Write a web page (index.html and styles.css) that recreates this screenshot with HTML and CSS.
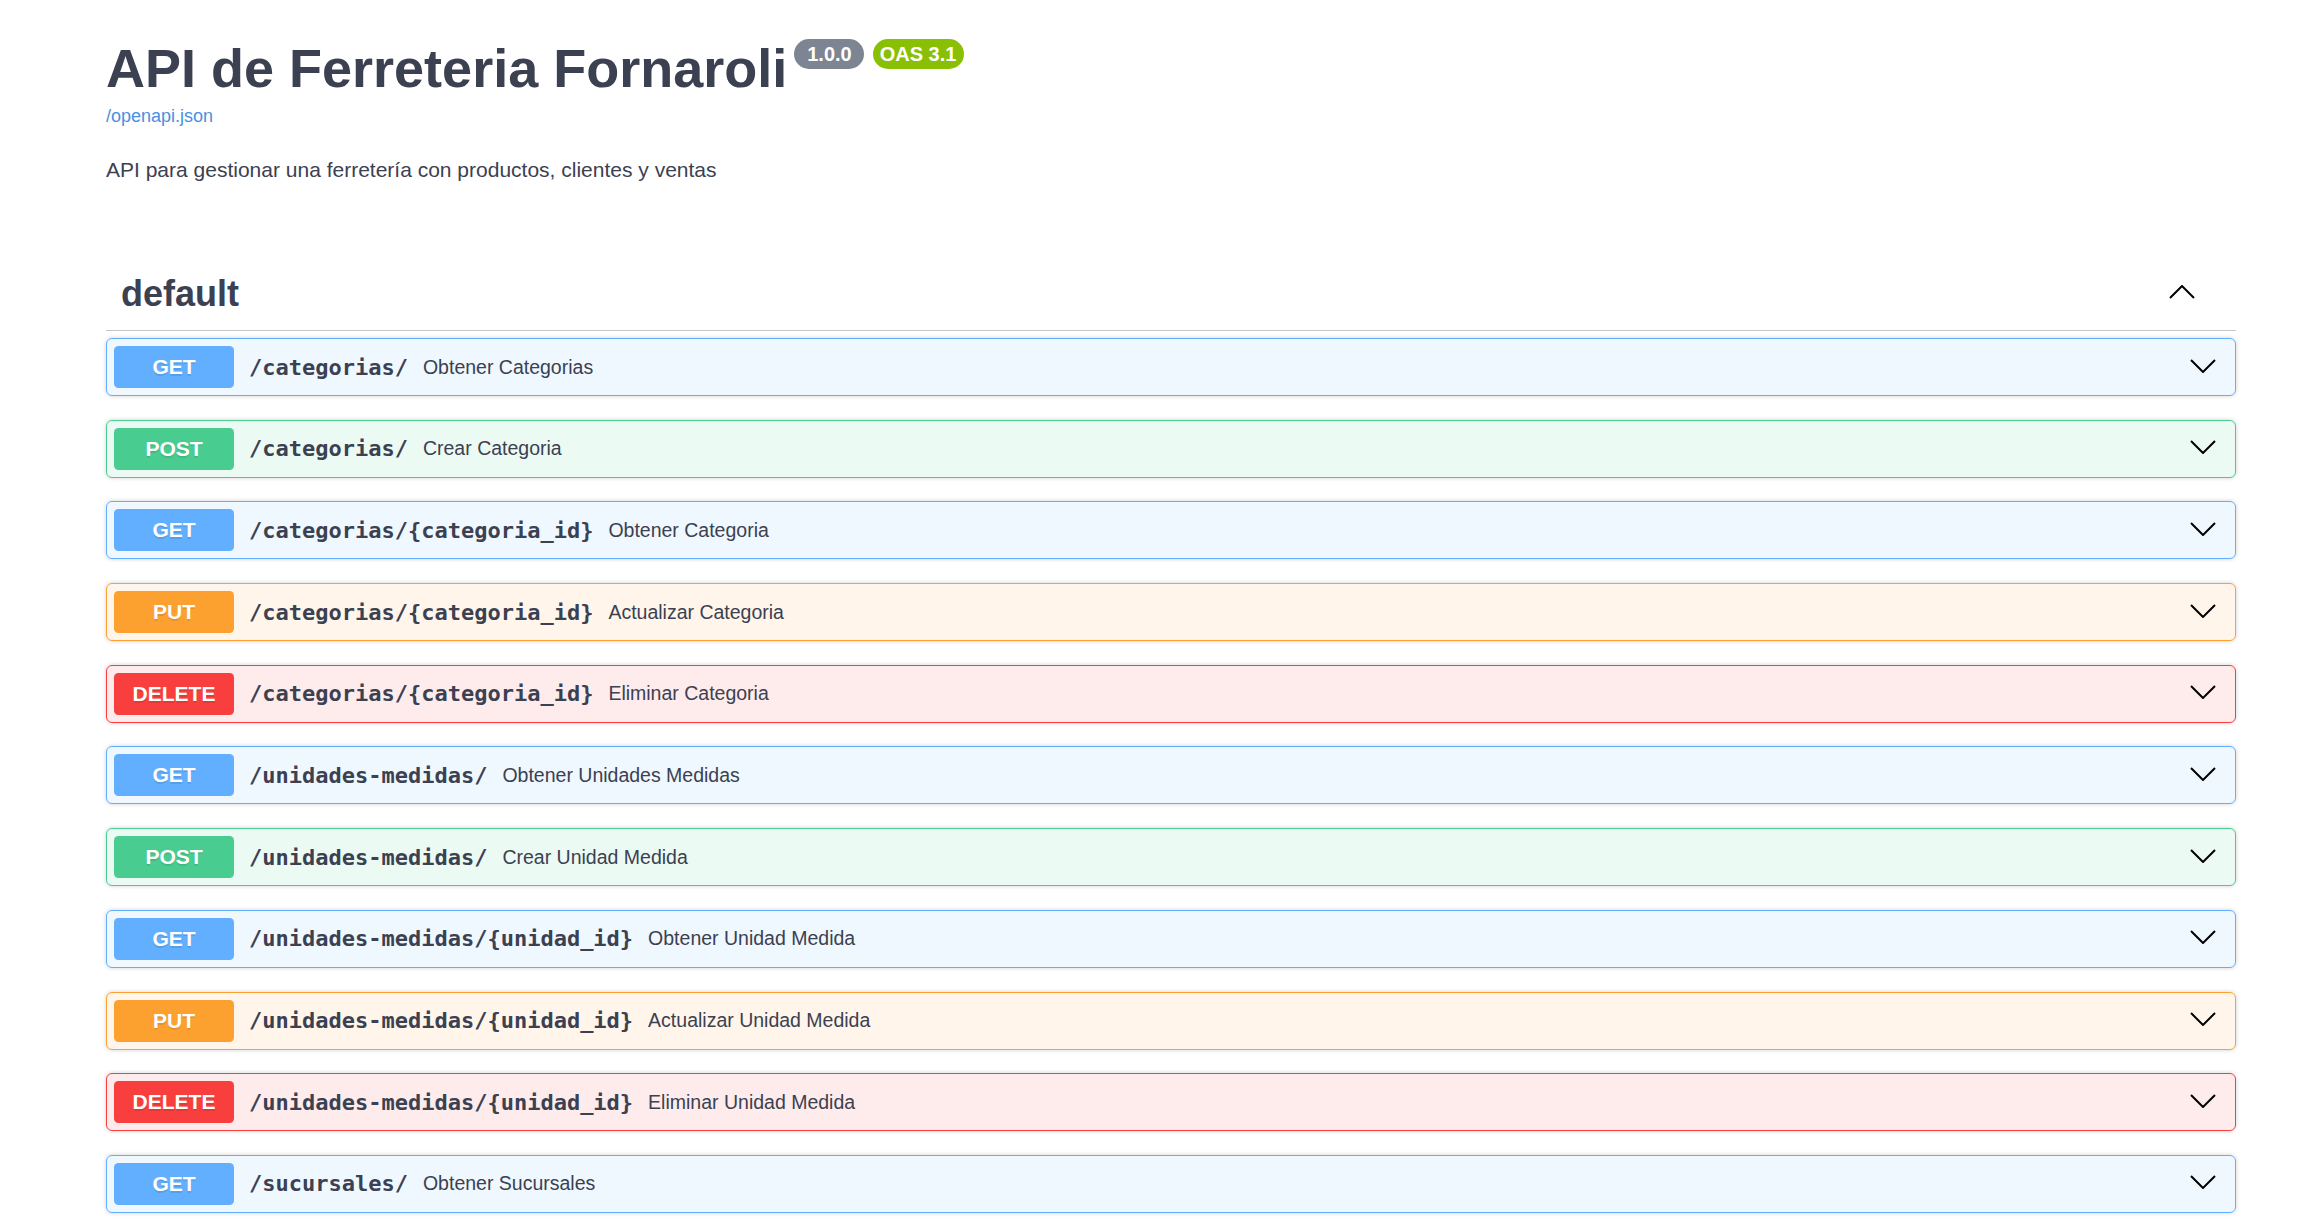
FILE: index.html
```html
<!DOCTYPE html>
<html lang="es">
<head>
<meta charset="utf-8">
<title>API de Ferreteria Fornaroli - Swagger UI</title>
<link rel="stylesheet" href="styles.css">
</head>
<body>
<div class="wrapper">
  <section class="info">
    <h2 class="title">
      <span class="title-text">API de Ferreteria Fornaroli</span>
      <span class="stamp stamp-version">1.0.0</span>
      <span class="stamp stamp-oas">OAS 3.1</span>
    </h2>
    <a class="url" href="#">/openapi.json</a>
    <p class="description">API para gestionar una ferretería con productos, clientes y ventas</p>
  </section>

  <section class="tag-section">
    <h3 class="tag">
      <span class="tag-name">default</span>
      <svg class="arrow" width="26" height="14" viewBox="0 0 26 14"><polyline points="1,13 13,1 25,13" fill="none" stroke="#000" stroke-width="2"/></svg>
    </h3>

    <div class="opblock get">
      <span class="method">GET</span>
      <span class="path">/categorias/</span>
      <span class="summary">Obtener Categorias</span>
      <svg class="arrow" width="26" height="14" viewBox="0 0 26 14"><polyline points="1,1 13,13 25,1" fill="none" stroke="#000" stroke-width="2"/></svg>
    </div>
    <div class="opblock post">
      <span class="method">POST</span>
      <span class="path">/categorias/</span>
      <span class="summary">Crear Categoria</span>
      <svg class="arrow" width="26" height="14" viewBox="0 0 26 14"><polyline points="1,1 13,13 25,1" fill="none" stroke="#000" stroke-width="2"/></svg>
    </div>
    <div class="opblock get">
      <span class="method">GET</span>
      <span class="path">/categorias/{categoria_id}</span>
      <span class="summary">Obtener Categoria</span>
      <svg class="arrow" width="26" height="14" viewBox="0 0 26 14"><polyline points="1,1 13,13 25,1" fill="none" stroke="#000" stroke-width="2"/></svg>
    </div>
    <div class="opblock put">
      <span class="method">PUT</span>
      <span class="path">/categorias/{categoria_id}</span>
      <span class="summary">Actualizar Categoria</span>
      <svg class="arrow" width="26" height="14" viewBox="0 0 26 14"><polyline points="1,1 13,13 25,1" fill="none" stroke="#000" stroke-width="2"/></svg>
    </div>
    <div class="opblock delete">
      <span class="method">DELETE</span>
      <span class="path">/categorias/{categoria_id}</span>
      <span class="summary">Eliminar Categoria</span>
      <svg class="arrow" width="26" height="14" viewBox="0 0 26 14"><polyline points="1,1 13,13 25,1" fill="none" stroke="#000" stroke-width="2"/></svg>
    </div>
    <div class="opblock get">
      <span class="method">GET</span>
      <span class="path">/unidades-medidas/</span>
      <span class="summary">Obtener Unidades Medidas</span>
      <svg class="arrow" width="26" height="14" viewBox="0 0 26 14"><polyline points="1,1 13,13 25,1" fill="none" stroke="#000" stroke-width="2"/></svg>
    </div>
    <div class="opblock post">
      <span class="method">POST</span>
      <span class="path">/unidades-medidas/</span>
      <span class="summary">Crear Unidad Medida</span>
      <svg class="arrow" width="26" height="14" viewBox="0 0 26 14"><polyline points="1,1 13,13 25,1" fill="none" stroke="#000" stroke-width="2"/></svg>
    </div>
    <div class="opblock get">
      <span class="method">GET</span>
      <span class="path">/unidades-medidas/{unidad_id}</span>
      <span class="summary">Obtener Unidad Medida</span>
      <svg class="arrow" width="26" height="14" viewBox="0 0 26 14"><polyline points="1,1 13,13 25,1" fill="none" stroke="#000" stroke-width="2"/></svg>
    </div>
    <div class="opblock put">
      <span class="method">PUT</span>
      <span class="path">/unidades-medidas/{unidad_id}</span>
      <span class="summary">Actualizar Unidad Medida</span>
      <svg class="arrow" width="26" height="14" viewBox="0 0 26 14"><polyline points="1,1 13,13 25,1" fill="none" stroke="#000" stroke-width="2"/></svg>
    </div>
    <div class="opblock delete">
      <span class="method">DELETE</span>
      <span class="path">/unidades-medidas/{unidad_id}</span>
      <span class="summary">Eliminar Unidad Medida</span>
      <svg class="arrow" width="26" height="14" viewBox="0 0 26 14"><polyline points="1,1 13,13 25,1" fill="none" stroke="#000" stroke-width="2"/></svg>
    </div>
    <div class="opblock get">
      <span class="method">GET</span>
      <span class="path">/sucursales/</span>
      <span class="summary">Obtener Sucursales</span>
      <svg class="arrow" width="26" height="14" viewBox="0 0 26 14"><polyline points="1,1 13,13 25,1" fill="none" stroke="#000" stroke-width="2"/></svg>
    </div>
  </section>
</div>
</body>
</html>
```

FILE: styles.css
```css
html {
  overflow: hidden;
}

body {
  margin: 0;
  background: #fff;
  font-family: "Liberation Sans", Arial, sans-serif;
  color: #3b4151;
}

.wrapper {
  width: 2130px;
  margin-left: 106px;
  padding-top: 40.5px;
}

.info {
  display: flex;
  flex-direction: column;
  align-items: flex-start;
}

.title {
  display: flex;
  align-items: flex-start;
  margin: 0;
  font-size: 54px;
  line-height: 54px;
  font-weight: 700;
  color: #3b4151;
}

.stamp {
  display: inline-block;
  height: 30px;
  line-height: 30px;
  font-size: 20px;
  font-weight: 700;
  color: #fff;
  border-radius: 85px;
}

.stamp-version {
  margin-left: 7px;
  margin-top: -1.5px;
  padding: 0 12px 0 13px;
  background: #7d8492;
}

.stamp-oas {
  margin-left: 9px;
  margin-top: -1.5px;
  padding: 0 8px 0 7px;
  background: #89bf04;
}

.url {
  margin-top: 11px;
  font-size: 18px;
  line-height: 21px;
  color: #4990e2;
  text-decoration: none;
}

.description {
  margin: 31px 0 0;
  font-size: 21px;
  line-height: 24px;
  color: #3b4151;
}

.tag-section {
  margin-top: 76px;
}

.tag {
  display: flex;
  align-items: center;
  justify-content: space-between;
  margin: 0 0 7.5px;
  padding: 15px 41px 15px 15px;
  border-bottom: 1.5px solid rgba(59, 65, 81, 0.3);
  font-size: 36px;
  line-height: 42px;
  font-weight: 700;
  color: #3b4151;
}

.tag .arrow {
  margin-top: -3px;
}

.opblock {
  display: flex;
  align-items: center;
  height: 58px;
  box-sizing: border-box;
  margin-bottom: 23.7px;
  padding: 0 19px 0 7px;
  border: 1.5px solid;
  border-radius: 6px;
  box-shadow: 0 0 4.5px rgba(0, 0, 0, 0.19);
}

.opblock .arrow {
  margin-left: auto;
  margin-top: -3px;
}

.method {
  width: 120px;
  height: 42px;
  line-height: 42px;
  border-radius: 4.5px;
  text-align: center;
  font-size: 21px;
  font-weight: 700;
  color: #fff;
  text-shadow: 0 1.5px 0 rgba(0, 0, 0, 0.1);
  flex-shrink: 0;
}

.path {
  padding: 0 15px;
  font-family: "DejaVu Sans Mono", monospace;
  font-size: 22px;
  font-weight: 700;
  color: #3b4151;
}

.summary {
  font-size: 19.5px;
  color: #3b4151;
}

.get {
  background: rgba(97, 175, 254, 0.1);
  border-color: #61affe;
}
.get .method {
  background: #61affe;
}

.post {
  background: rgba(73, 204, 144, 0.1);
  border-color: #49cc90;
}
.post .method {
  background: #49cc90;
}

.put {
  background: rgba(252, 161, 48, 0.1);
  border-color: #fca130;
}
.put .method {
  background: #fca130;
}

.delete {
  background: rgba(249, 62, 62, 0.1);
  border-color: #f93e3e;
}
.delete .method {
  background: #f93e3e;
}
```
